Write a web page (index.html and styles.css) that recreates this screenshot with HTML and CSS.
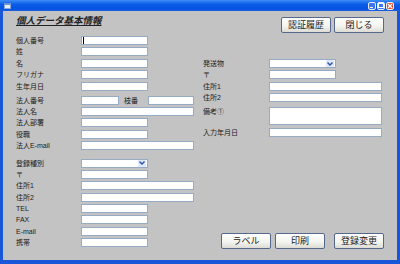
FILE: index.html
```html
<!DOCTYPE html>
<html lang="ja">
<head>
    <meta charset="UTF-8">
    <meta name="viewport" content="width=device-width, initial-scale=1.0">
    <title>個人データ基本情報</title>
    <link rel="stylesheet" href="styles.css">
</head>
<body>
    <div class="window">
        <div class="titlebar">
            <span class="app-icon"></span>
            <div class="controls">
                <span class="ctl ctl-min"></span>
                <span class="ctl ctl-max"></span>
                <span class="ctl ctl-close">
                    <svg width="6" height="6" viewBox="0 0 6 6"><path d="M1 1L5 5M5 1L1 5" stroke="#fff" stroke-width="1.3"/></svg>
                </span>
            </div>
        </div>

        <div class="client">
            <div class="header">
                <h1>個人データ基本情報</h1>
                <div class="actions">
                    <button class="btn">認証履歴</button>
                    <button class="btn">閉じる</button>
                </div>
            </div>

            <div class="main">
                <!-- 左側 -->
                <div class="col-left">
                    <div class="group">
                        <label>個人番号</label><div class="field short"><span class="caret"></span></div>
                        <label>姓</label><div class="field short"></div>
                        <label>名</label><div class="field short"></div>
                        <label>フリガナ</label><div class="field short"></div>
                        <label>生年月日</label><div class="field short"></div>
                    </div>
                    <div class="group group-corp">
                        <label>法人番号</label>
                        <div class="split">
                            <div class="field tiny"></div>
                            <span class="sub-label">枝番</span>
                            <div class="field branch"></div>
                        </div>
                        <label>法人名</label><div class="field long"></div>
                        <label>法人部署</label><div class="field short"></div>
                        <label>役職</label><div class="field short"></div>
                        <label>法人E-mail</label><div class="field long"></div>
                    </div>
                    <div class="group group-reg">
                        <label>登録種別</label><div class="field short select"><span class="drop"><svg width="6" height="4" viewBox="0 0 6 4"><path d="M0.5 0.5L3 3L5.5 0.5" fill="none" stroke="#2a4fa8" stroke-width="1.4"/></svg></span></div>
                        <label>〒</label><div class="field short"></div>
                        <label>住所1</label><div class="field long"></div>
                        <label>住所2</label><div class="field long"></div>
                        <label>TEL</label><div class="field short"></div>
                        <label>FAX</label><div class="field short"></div>
                        <label>E-mail</label><div class="field short"></div>
                        <label>携帯</label><div class="field short"></div>
                    </div>
                </div>

                <!-- 右側 -->
                <div class="col-right">
                    <div class="group">
                        <label>発送物</label><div class="field short select"><span class="drop"><svg width="6" height="4" viewBox="0 0 6 4"><path d="M0.5 0.5L3 3L5.5 0.5" fill="none" stroke="#2a4fa8" stroke-width="1.4"/></svg></span></div>
                        <label>〒</label><div class="field short"></div>
                        <label>住所1</label><div class="field long"></div>
                        <label>住所2</label><div class="field long"></div>
                    </div>
                    <div class="group group-memo">
                        <label class="top">備考①</label><div class="field long memo"></div>
                    </div>
                    <div class="group group-date">
                        <label>入力年月日</label><div class="field long"></div>
                    </div>

                    <div class="footer">
                        <button class="btn">ラベル</button>
                        <button class="btn">印刷</button>
                        <button class="btn btn-save">登録変更</button>
                    </div>
                </div>
            </div>
        </div>
    </div>
</body>
</html>
```

FILE: styles.css
```css
body {
    margin: 0;
    padding: 0;
    font-family: "Liberation Sans", "Noto Sans CJK JP", sans-serif;
    background: #fff;
}

.window {
    width: 400px;
    height: 264px;
    box-sizing: border-box;
    background: #1f5fe0;
    border-left: 3px solid #1a57d8;
    border-right: 3px solid #1a57d8;
    border-bottom: 4px solid #1a57d8;
    display: flex;
    flex-direction: column;
}

.titlebar {
    height: 11px;
    margin: 0 -3px;
    padding: 0 4px;
    display: flex;
    align-items: center;
    justify-content: space-between;
    background: linear-gradient(#3d8cf7, #0a5ce8 40%, #0553e0 80%, #1a5fe0);
}

.app-icon {
    width: 7px;
    height: 6px;
    background: #e8eef8;
    border: 1px solid #8aa6d8;
    border-top: 2px solid #6b8fd0;
    box-sizing: border-box;
}

.controls {
    display: flex;
    gap: 1px;
    padding-right: 2px;
}

.ctl {
    width: 8px;
    height: 8px;
    box-sizing: border-box;
    border: 1px solid #e6ecf8;
    border-radius: 2px;
    background: #3b78ef;
    display: flex;
    align-items: center;
    justify-content: center;
}

.ctl-min::after {
    content: "";
    width: 3px;
    height: 1px;
    background: #fff;
    margin-top: 3px;
    margin-left: -1px;
}

.ctl-max::after {
    content: "";
    width: 4px;
    height: 3px;
    border: 1px solid #fff;
    border-top-width: 1px;
}

.ctl-close {
    background: #e0542c;
}

.client {
    flex: 1;
    background: #c3c3c3;
    padding: 0 13px;
    display: flex;
    flex-direction: column;
    color: #1c1c1c;
}

.header {
    height: 25px;
    display: flex;
    justify-content: space-between;
    align-items: flex-start;
}

h1 {
    margin: 3px 0 0 0;
    font-family: "Noto Sans CJK JP", sans-serif;
    font-size: 9.5px;
    line-height: 12px;
    font-weight: bold;
    font-style: italic;
    text-decoration: underline;
    color: #222;
}

.actions {
    display: flex;
    gap: 3px;
    margin-top: 6px;
}

.btn {
    width: 50px;
    height: 16px;
    padding: 0;
    font-family: "Noto Sans CJK JP", sans-serif;
    font-size: 9px;
    line-height: 14px;
    color: #1a1a1a;
    background: linear-gradient(#ffffff, #f3f3ee 60%, #dcdcd4);
    border: 1px solid #56698c;
    border-radius: 2px;
}

.main {
    flex: 1;
    display: flex;
    gap: 9px;
}

.col-left {
    width: 178px;
}

.col-right {
    width: 181px;
    padding-top: 23px;
    display: flex;
    flex-direction: column;
}

.group {
    display: grid;
    grid-template-columns: 65px auto;
    grid-auto-rows: 9px;
    row-gap: 2.4px;
    align-items: center;
}

.col-right .group {
    grid-template-columns: 66px auto;
}

.group-corp {
    margin-top: 5px;
}

.group-reg {
    margin-top: 8.4px;
}

.col-right .group-memo {
    margin-top: 4.6px;
    grid-auto-rows: 18px;
}

.group-date {
    margin-top: 3.6px;
}

label,
.sub-label {
    font-size: 7px;
    line-height: 9px;
    color: #202020;
    white-space: nowrap;
}

label.top {
    align-self: start;
}

.field {
    height: 9px;
    box-sizing: border-box;
    background: #fff;
    border: 1px solid #98abc6;
    position: relative;
}

.short {
    width: 67px;
}

.long {
    width: 113px;
}

.memo {
    height: 18px;
}

.split {
    display: flex;
    align-items: center;
}

.tiny {
    width: 38px;
}

.sub-label {
    width: 29px;
    padding-left: 5px;
    box-sizing: border-box;
}

.branch {
    width: 46px;
}

.caret {
    position: absolute;
    left: 1px;
    top: 0;
    width: 1px;
    height: 7px;
    background: #000;
}

.drop {
    position: absolute;
    right: 1px;
    top: 0;
    width: 8px;
    height: 7px;
    background: #dfe8f8;
    display: flex;
    align-items: center;
    justify-content: center;
}

.footer {
    margin-top: auto;
    margin-bottom: 11px;
    display: flex;
    justify-content: flex-end;
    gap: 4px;
    padding-left: 18px;
}

.btn-save {
    margin-left: 5px;
}
```
